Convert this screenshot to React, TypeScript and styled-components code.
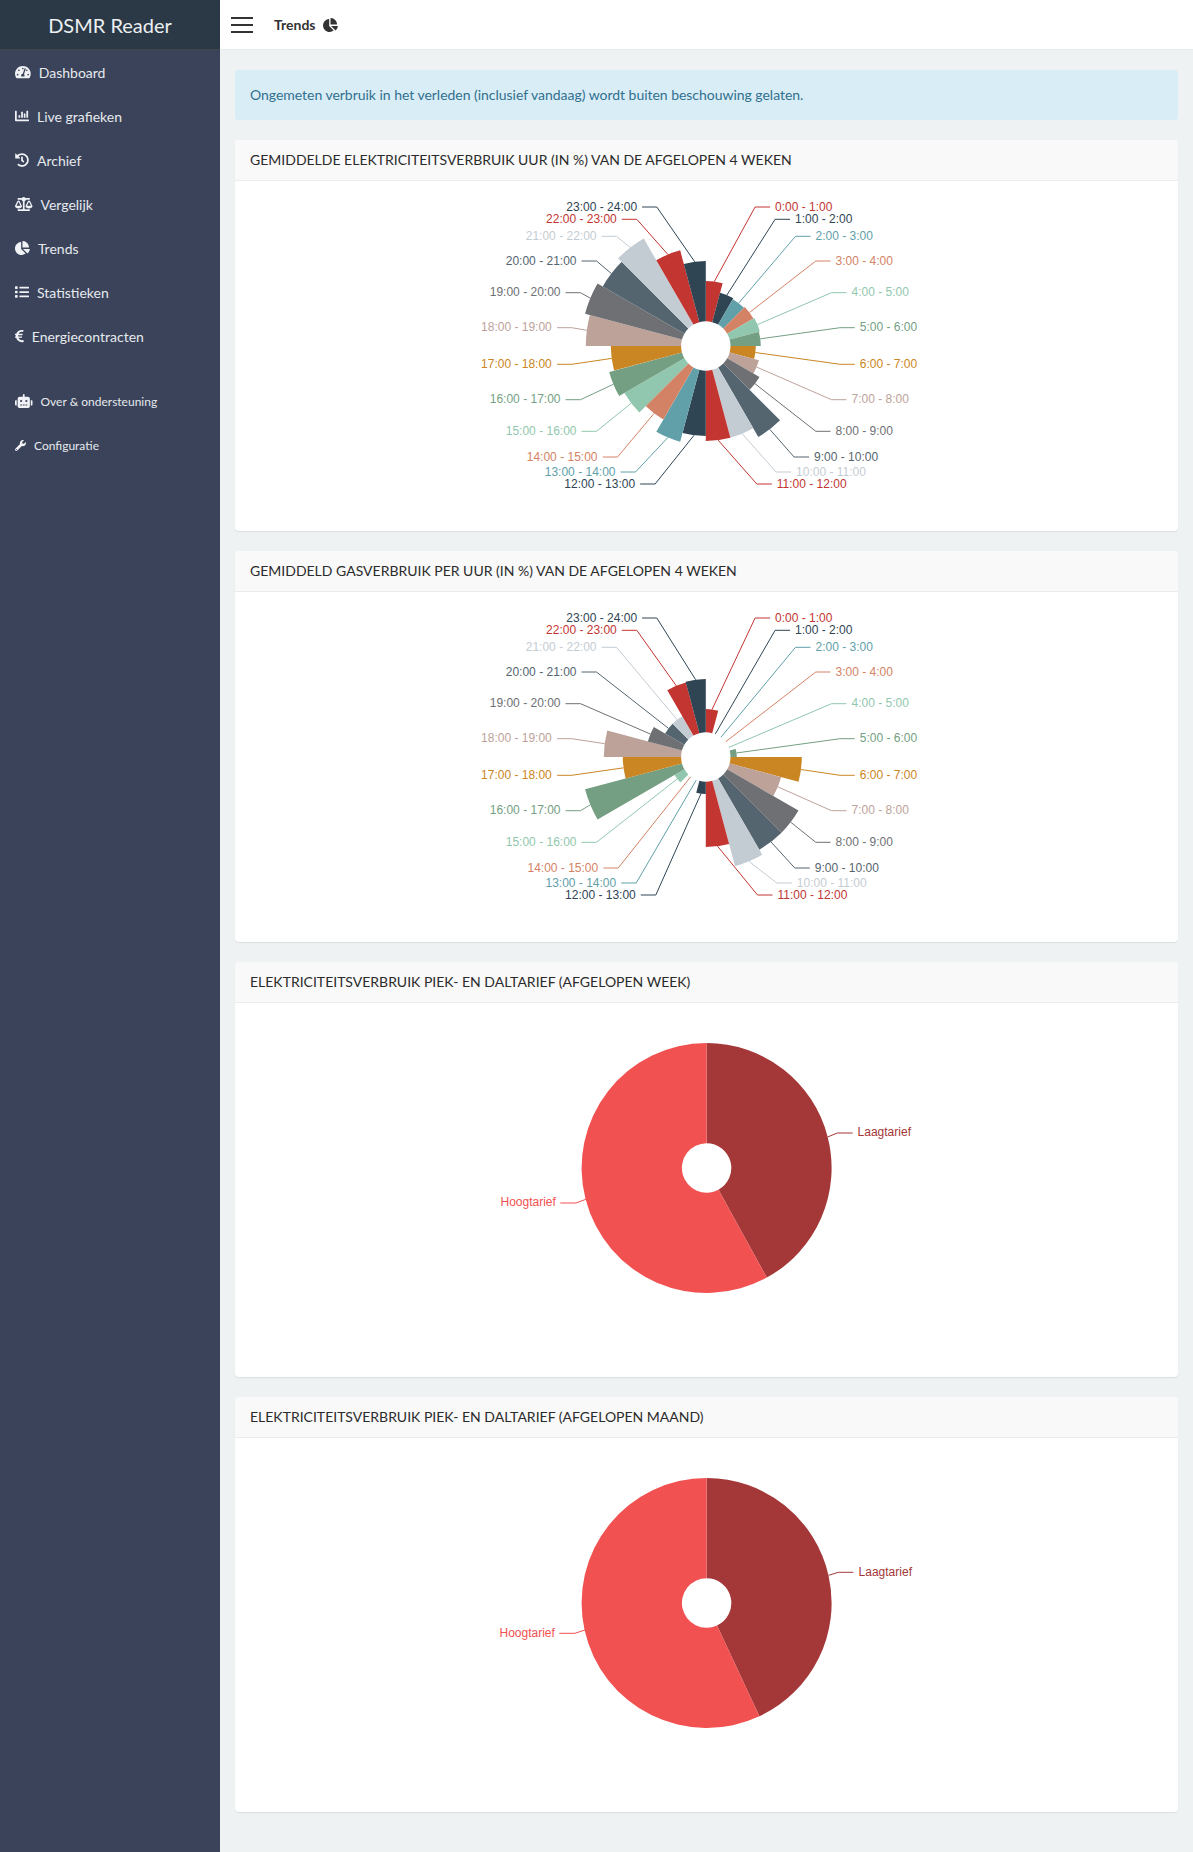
import React from "react";
import styled, { createGlobalStyle } from "styled-components";
import {
  FaBalanceScale,
  FaChartBar,
  FaChartPie,
  FaEuroSign,
  FaHistory,
  FaList,
  FaRobot,
  FaTachometerAlt,
  FaWrench,
} from "react-icons/fa";

const GlobalStyle = createGlobalStyle`
  html, body {
    margin: 0;
    padding: 0;
    background: #eef2f3;
  }
  body {
    font-family: Lato, "Open Sans", sans-serif;
    font-size: 14px;
    color: #333;
  }
`;

const Page = styled.div`
  display: flex;
  width: 1193px;
  min-height: 1852px;
`;

const Sidebar = styled.aside`
  width: 220px;
  flex: none;
  background: #3a4359;
`;

const Brand = styled.div`
  height: 50px;
  display: flex;
  align-items: center;
  justify-content: center;
  background: #2a3945;
  border-bottom: 1px solid #3f4549;
  box-sizing: border-box;
  color: #ecf0f1;
  font-size: 20px;
`;

const Menu = styled.nav`
  display: flex;
  flex-direction: column;
`;

const MenuItem = styled.a<{ $small?: boolean; $first?: boolean; $iconWidth: number; $iconHeight?: number }>`
  display: flex;
  align-items: center;
  height: 44px;
  padding-left: 15px;
  gap: 8px;
  color: #e6e9ee;
  font-size: ${(p) => (p.$small ? "12px" : "14px")};
  margin-top: ${(p) => (p.$first ? "21px" : "0")};

  svg {
    flex: none;
    width: ${(p) => p.$iconWidth}px;
    height: ${(p) => p.$iconHeight ?? 14}px;
    color: #f0f2f5;
  }
`;

const Main = styled.main`
  flex: 1;
  min-width: 0;
`;

const TopBar = styled.header`
  height: 50px;
  box-sizing: border-box;
  display: flex;
  align-items: center;
  padding-left: 11px;
  background: #fff;
  border-bottom: 1px solid #e9ecec;
`;

const Hamburger = styled.div`
  width: 22px;
  display: flex;
  flex-direction: column;
  gap: 5px;

  span {
    height: 2px;
    background: #333;
  }
`;

const PageTitle = styled.h1`
  margin: 0 0 0 21px;
  display: flex;
  align-items: center;
  gap: 8px;
  font-size: 14px;
  font-weight: 700;
  color: #333;

  svg {
    width: 15px;
    height: 14px;
  }
`;

const Content = styled.div`
  display: flex;
  flex-direction: column;
  gap: 20px;
  padding: 20px 15px 40px;
`;

const Alert = styled.div`
  height: 50px;
  box-sizing: border-box;
  display: flex;
  align-items: center;
  padding: 0 15px 2px;
  border-radius: 3px;
  background: #d9edf7;
  color: #31708f;
  letter-spacing: -0.03px;
`;

const Card = styled.section`
  background: #fff;
  border-radius: 4px;
  box-shadow: 0 1px 1px rgba(0, 0, 0, 0.08);
  overflow: hidden;
`;

const CardHeader = styled.h2`
  margin: 0;
  height: 41px;
  box-sizing: border-box;
  display: flex;
  align-items: center;
  padding: 0 15px 2px;
  background: #f9f9f9;
  border-bottom: 1px solid #ececec;
  font-size: 14px;
  font-weight: 400;
  color: #2b2b2b;
`;

const ChartSvg = styled.svg`
  display: block;
`;

const ChartLabel = styled.text`
  font-family: "Liberation Sans", Arial, sans-serif;
  font-size: 12px;
`;

const PALETTE = [
  "#c23531",
  "#2f4554",
  "#61a0a8",
  "#d48265",
  "#91c7ae",
  "#749f83",
  "#ca8622",
  "#bda29a",
  "#6e7074",
  "#546570",
  "#c4ccd3",
];

// elbow x, y, line end x, text x, all relative to the chart centre
const HOUR_LABELS: [string, number, number, number, number][] = [
  ["0:00 - 1:00", 49.3, -139, 64.3, 69.3],
  ["1:00 - 2:00", 69.3, -126.7, 84.3, 89.3],
  ["2:00 - 3:00", 89.7, -109.7, 104.7, 109.7],
  ["3:00 - 4:00", 110, -85, 124.7, 129.7],
  ["4:00 - 5:00", 125.7, -53.3, 140.7, 145.7],
  ["5:00 - 6:00", 134.3, -18.3, 149, 154],
  ["6:00 - 7:00", 134.3, 18.3, 149, 154],
  ["7:00 - 8:00", 125.7, 53.7, 140.7, 145.7],
  ["8:00 - 9:00", 110, 85.3, 124.7, 129.7],
  ["9:00 - 10:00", 88.3, 111, 103.3, 108.3],
  ["10:00 - 11:00", 70.3, 126, 85.3, 90.3],
  ["11:00 - 12:00", 51, 138, 66, 71],
  ["12:00 - 13:00", -50.7, 138, -65.7, -70.7],
  ["13:00 - 14:00", -70.3, 126, -85.3, -90.3],
  ["14:00 - 15:00", -88.3, 111, -103, -108.3],
  ["15:00 - 16:00", -109.3, 85.3, -124.3, -129.3],
  ["16:00 - 17:00", -125.3, 53.7, -140.3, -145.3],
  ["17:00 - 18:00", -134, 18.3, -148.7, -154],
  ["18:00 - 19:00", -134, -18.3, -148.7, -154],
  ["19:00 - 20:00", -125.3, -53.3, -140.3, -145.3],
  ["20:00 - 21:00", -109.3, -85, -124.3, -129.3],
  ["21:00 - 22:00", -89.3, -109.7, -104.3, -109.3],
  ["22:00 - 23:00", -69, -126.7, -84, -89],
  ["23:00 - 24:00", -49, -139, -63.7, -68.7],
];

const ELECTRICITY_RADII = [
  65, 55, 54, 55, 56, 55, 50, 55, 62, 105, 95, 95, 90, 99, 85, 94, 100, 95, 120, 125, 119, 124, 99, 85,
];
const GAS_RADII = [
  48, 25, 25, 25, 25, 31, 96, 78, 107, 107, 113, 90, 37, 25, 25, 36, 125, 83, 102, 60, 47, 47, 77, 78,
];

const INNER_RADIUS = 24.7;

const polar = (cx: number, cy: number, r: number, deg: number) => {
  const a = (deg * Math.PI) / 180;
  return [cx + r * Math.sin(a), cy - r * Math.cos(a)];
};

const wedgePath = (cx: number, cy: number, r: number, from: number, to: number) => {
  const [ax, ay] = polar(cx, cy, r, from);
  const [bx, by] = polar(cx, cy, r, to);
  const [dx, dy] = polar(cx, cy, INNER_RADIUS, to);
  const [ex, ey] = polar(cx, cy, INNER_RADIUS, from);
  const large = to - from > 180 ? 1 : 0;
  return `M${ax} ${ay}A${r} ${r} 0 ${large} 1 ${bx} ${by}L${dx} ${dy}A${INNER_RADIUS} ${INNER_RADIUS} 0 ${large} 0 ${ex} ${ey}Z`;
};

const RoseChart = ({ radii, shifted }: { radii: number[]; shifted?: boolean }) => {
  const cx = 470.8;
  const cy = 165;
  return (
    <ChartSvg width={943} height={350}>
      {radii.map((r, i) => {
        const color = PALETTE[i % PALETTE.length];
        if (r <= 25) return null;
        return <path key={i} d={wedgePath(cx, cy, r, i * 15, (i + 1) * 15)} fill={color} />;
      })}
      {HOUR_LABELS.map(([text, elbowX, y, endX, textX], i) => {
        const color = PALETTE[i % PALETTE.length];
        const dx = shifted && i >= 9 && i <= 14 ? 0.7 : 0;
        const [sx, sy] = polar(cx, cy, radii[i], i * 15 + 7.5);
        return (
          <g key={text}>
            <polyline
              points={`${sx},${sy} ${cx + elbowX + dx},${cy + y} ${cx + endX + dx},${cy + y}`}
              fill="none"
              stroke={color}
            />
            <ChartLabel
              x={cx + textX + dx}
              y={cy + y + 3.5}
              fill={color}
              textAnchor={textX < 0 ? "end" : "start"}
            >
              {text}
            </ChartLabel>
          </g>
        );
      })}
    </ChartSvg>
  );
};

type PieLabel = { start: [number, number]; elbow: [number, number]; endX: number; textX: number };

const LOW_COLOR = "#a43737";
const HIGH_COLOR = "#f15151";

const TariffPie = ({
  split,
  low,
  high,
  textDrop,
}: {
  split: number;
  low: PieLabel;
  high: PieLabel;
  textDrop: number;
}) => {
  const cx = 471.6;
  const cy = 165;
  const labels: [string, string, PieLabel][] = [
    ["Laagtarief", LOW_COLOR, low],
    ["Hoogtarief", HIGH_COLOR, high],
  ];
  return (
    <ChartSvg width={943} height={374}>
      <path d={wedgePath(cx, cy, 125, 0, split)} fill={LOW_COLOR} />
      <path d={wedgePath(cx, cy, 125, split, 360)} fill={HIGH_COLOR} />
      {labels.map(([text, color, l]) => (
        <g key={text}>
          <polyline
            points={`${cx + l.start[0]},${cy + l.start[1]} ${cx + l.elbow[0]},${cy + l.elbow[1]} ${cx + l.endX},${cy + l.elbow[1]}`}
            fill="none"
            stroke={color}
          />
          <ChartLabel
            x={cx + l.textX}
            y={cy + l.elbow[1] + textDrop}
            fill={color}
            textAnchor={l.textX < 0 ? "end" : "start"}
          >
            {text}
          </ChartLabel>
        </g>
      ))}
    </ChartSvg>
  );
};

const App = () => (
  <Page>
    <GlobalStyle />
    <Sidebar>
      <Brand>DSMR Reader</Brand>
      <Menu>
        <MenuItem $iconWidth={15.75}><FaTachometerAlt />Dashboard</MenuItem>
        <MenuItem $iconWidth={14}><FaChartBar />Live grafieken</MenuItem>
        <MenuItem $iconWidth={14}><FaHistory />Archief</MenuItem>
        <MenuItem $iconWidth={17.5}><FaBalanceScale />Vergelijk</MenuItem>
        <MenuItem $iconWidth={14.9}><FaChartPie />Trends</MenuItem>
        <MenuItem $iconWidth={14}><FaList />Statistieken</MenuItem>
        <MenuItem $iconWidth={8.75}><FaEuroSign />Energiecontracten</MenuItem>
        <MenuItem $small $first $iconWidth={17.5}><FaRobot />Over &amp; ondersteuning</MenuItem>
        <MenuItem $small $iconWidth={11} $iconHeight={11}><FaWrench />Configuratie</MenuItem>
      </Menu>
    </Sidebar>
    <Main>
      <TopBar>
        <Hamburger><span /><span /><span /></Hamburger>
        <PageTitle>Trends <FaChartPie /></PageTitle>
      </TopBar>
      <Content>
        <Alert>Ongemeten verbruik in het verleden (inclusief vandaag) wordt buiten beschouwing gelaten.</Alert>
        <Card>
          <CardHeader>GEMIDDELDE ELEKTRICITEITSVERBRUIK UUR (IN %) VAN DE AFGELOPEN 4 WEKEN</CardHeader>
          <RoseChart radii={ELECTRICITY_RADII} />
        </Card>
        <Card>
          <CardHeader>GEMIDDELD GASVERBRUIK PER UUR (IN %) VAN DE AFGELOPEN 4 WEKEN</CardHeader>
          <RoseChart radii={GAS_RADII} shifted />
        </Card>
        <Card>
          <CardHeader>ELEKTRICITEITSVERBRUIK PIEK- EN DALTARIEF (AFGELOPEN WEEK)</CardHeader>
          <TariffPie
            split={151.2}
            textDrop={2.6}
            low={{ start: [121, -31], elbow: [130.7, -35], endX: 146, textX: 151 }}
            high={{ start: [-120.7, 31.3], elbow: [-130.7, 35], endX: -146.3, textX: -150.7 }}
          />
        </Card>
        <Card>
          <CardHeader>ELEKTRICITEITSVERBRUIK PIEK- EN DALTARIEF (AFGELOPEN MAAND)</CardHeader>
          <TariffPie
            split={155}
            textDrop={3.6}
            low={{ start: [122, -27.7], elbow: [131.7, -30.7], endX: 146.7, textX: 152 }}
            high={{ start: [-121.7, 27], elbow: [-131.7, 30.3], endX: -147.3, textX: -151.7 }}
          />
        </Card>
      </Content>
    </Main>
  </Page>
);

export default App;
